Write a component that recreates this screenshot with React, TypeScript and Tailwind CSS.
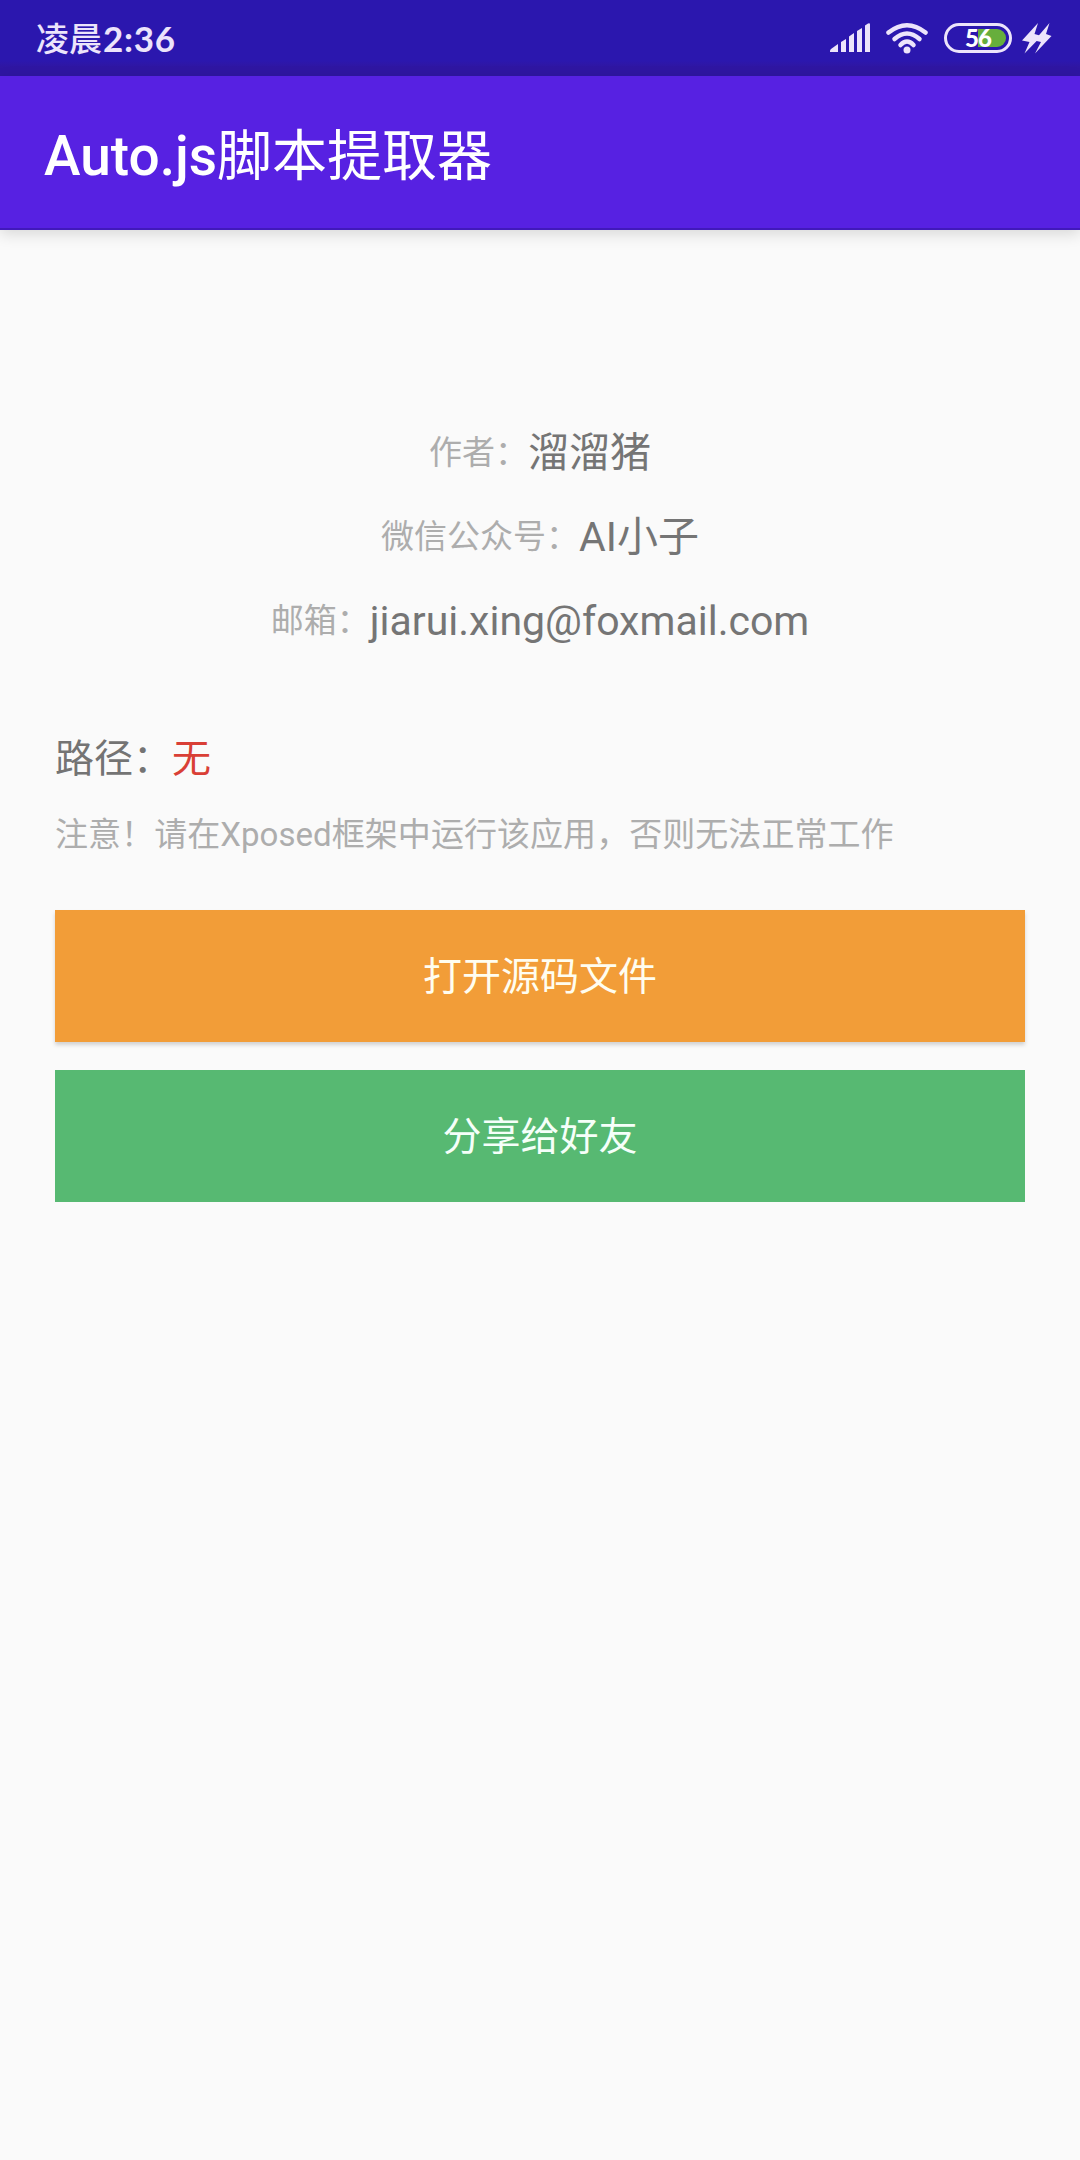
import type { ReactNode } from "react";

function InfoRow({ label, children }: { label: string; children: ReactNode }) {
  return (
    <div className="flex h-[84px] items-center justify-center">
      <span className="pb-[2px] text-[33px] text-[#adadad]">{label}</span>
      <span className="text-[41px] text-[#757575]">{children}</span>
    </div>
  );
}

function SignalIcon() {
  return (
    <svg width="42" height="30" viewBox="829 23 42 30" fill="currentColor">
      <path d="M830 52V51Q830 50 831 49L838 44V52Z" />
      <path d="M841 52V42L846 39V52Z" />
      <path d="M849 52V36.500L854 33V52Z" />
      <path d="M857 52V31L862 28V52Z" />
      <path d="M865 52V25.500L868 23.500Q870 22.500 870 24.500V52Z" />
    </svg>
  );
}

function WifiIcon() {
  return (
    <svg
      width="44"
      height="32"
      viewBox="885 22 44 32"
      fill="none"
      stroke="currentColor"
      strokeWidth="4.500"
      strokeLinecap="round"
      className="ml-[14px]"
    >
      <path d="M888.500 32.500Q907 18 925.500 32.500" />
      <path d="M894.500 39Q907 28 919.500 39" />
      <path d="M900.500 45Q907 38 913.500 45" />
      <circle cx="907" cy="50" r="3.500" fill="currentColor" stroke="none" />
    </svg>
  );
}

function BoltIcon() {
  return (
    <svg width="30" height="32" viewBox="1022 22 30 32" fill="currentColor">
      <path d="M1038 23L1022 40.500L1029.500 42L1024.500 53.500L1041.500 36L1034.500 34Z" />
      <path d="M1049.500 23L1034.500 40.500L1041 42L1035 53.500L1051.500 36L1046 34Z" />
    </svg>
  );
}

function StatusBar() {
  return (
    <div className="flex h-[76px] items-center bg-linear-to-b from-[#2b17ae] from-80% to-[#2f16a2] to-88% pr-[28px] pl-[36px] text-[#ece4fb]">
      <span className="pt-[2px] text-[33px] leading-none font-medium">凌晨</span>
      <span className="ml-[1px] font-[Lato] text-[35px] leading-none font-bold tracking-[0.7px]">2:36</span>
      <div className="ml-auto flex items-center">
        <SignalIcon />
        <WifiIcon />
        {/* Battery */}
        <div className="relative ml-[15px] flex h-[30px] w-[68px] items-center justify-center rounded-full border-[3px] border-current">
          <div className="absolute top-[3px] right-[3px] h-[18px] w-[28px] rounded-r-full bg-[#67ae3c]" />
          <span className="relative font-[Lato] text-[24px] leading-none font-black tracking-[-1px] text-white">56</span>
        </div>
        <div className="ml-[10px]">
          <BoltIcon />
        </div>
      </div>
    </div>
  );
}

export default function App() {
  return (
    <div className="flex h-[2160px] w-[1080px] flex-col bg-[#fafafa] font-[Roboto,'Noto_Sans_CJK_SC',sans-serif]">
      <StatusBar />
      <header className="flex h-[154px] items-center border-b-2 border-[#4119bb] bg-[#5721e2] px-[44px] pt-[9px] text-[55px] font-medium text-white shadow-[0_4px_14px_rgba(0,0,0,0.14)]">
        <h1>
          Auto.js<span className="font-normal">脚本提取器</span>
        </h1>
      </header>
      <main className="px-[55px] pt-[182px]">
        <InfoRow label="作者：">溜溜猪</InfoRow>
        <InfoRow label="微信公众号：">AI小子</InfoRow>
        <InfoRow label="邮箱：">jiarui.xing@foxmail.com</InfoRow>
        <p className="mt-[66px] text-[39px] text-[#747474]">
          路径：<span className="text-[#d93f36]">无</span>
        </p>
        <p className="mt-[21px] text-[33px] tracking-[0.05px] text-[#adadad]">
          注意！请在Xposed框架中运行该应用，否则无法正常工作
        </p>
        <button className="mt-[51px] block h-[132px] w-full bg-[#f29d38] pt-[3px] text-[39px] text-[#fffdf0] shadow-[0_3px_4px_rgba(0,0,0,0.16)]">
          打开源码文件
        </button>
        <button className="mt-[28px] block h-[132px] w-full bg-[#57b972] pt-[3px] text-[39px] text-[#f5fff9]">
          分享给好友
        </button>
      </main>
    </div>
  );
}
